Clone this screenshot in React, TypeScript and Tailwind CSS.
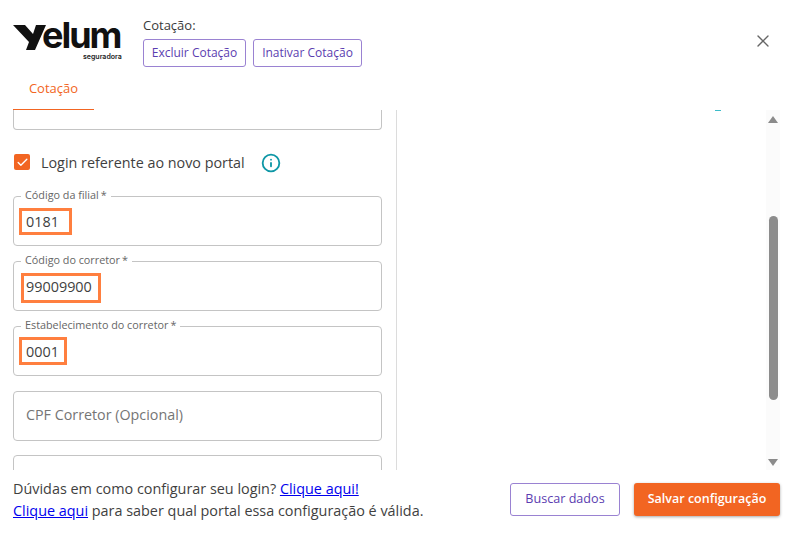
import { Check, Info, X } from 'lucide-react';

interface FieldProps {
  label: string;
  value: string;
  boxClass: string;
}

function Field({ label, value, boxClass }: FieldProps) {
  return (
    <div className="relative h-[50px] w-[369px] shrink-0 rounded-[4px] border border-[#c4c4c4]">
      <span className="absolute left-[7px] top-[-10px] whitespace-nowrap bg-white px-[4px] text-[10.8px] leading-[15px] text-[#666666]">
        {label}
        <span className="ml-[2px]">*</span>
      </span>
      <div className={`absolute border-[3px] border-[#ff7f3f] text-[14.4px] leading-[20px] text-[#3f3f3f] ${boxClass}`}>
        {value}
      </div>
    </div>
  );
}

export default function App() {
  return (
    <div className="flex h-[538px] w-[792px] flex-col overflow-hidden bg-white font-['Open_Sans',sans-serif] text-[#3f3f3f]">
      <header className="flex h-[70px] shrink-0 items-start pl-[13px] pr-[20px]">
        <div className="mt-[20px] flex h-[42px] w-[130px] shrink-0 flex-col">
          <div className="flex h-[30px] items-end">
            <svg width="33" height="26" viewBox="0 0 33 26" className="shrink-0">
              <path d="M0 1h12l8 9 3-9h10L22 26h-9l3-8z" fill="#111111" />
            </svg>
            <span className="ml-[-4px] font-['Inter',sans-serif] text-[36px] leading-[30px] font-bold tracking-[-2px] text-[#111111]">
              elum
            </span>
          </div>
          <span className="ml-[70px] mt-[3px] w-[40px] whitespace-nowrap font-['Inter',sans-serif] text-[7px] leading-[8px] font-semibold text-[#222222]">
            seguradora
          </span>
        </div>
        <div className="mt-[16px] flex flex-col">
          <span className="text-[13px] leading-[18px] text-[#3a3a3a]">Cotação:</span>
          <div className="mt-[5px] flex gap-[7px]">
            <button className="h-[28px] w-[103px] rounded-[3px] border border-[#9a82d2] text-[12px] text-[#5b3db0]">
              Excluir Cotação
            </button>
            <button className="h-[28px] w-[109px] rounded-[3px] border border-[#9a82d2] text-[12px] text-[#5b3db0]">
              Inativar Cotação
            </button>
          </div>
        </div>
        <X size={20} strokeWidth={1.6} className="mt-[31px] ml-auto mr-[-1px] text-[#666666]" />
      </header>

      <nav className="flex h-[40px] shrink-0 pl-[13px]">
        <div className="flex h-[40px] w-[81px] items-center justify-center border-b border-[#f26522] pb-[2px] text-[13px] text-[#f26522]">
          Cotação
        </div>
      </nav>

      <main className="flex h-[360px] shrink-0 pl-[13px] pr-[12px]">
        <section className="flex w-[369px] shrink-0 flex-col overflow-hidden">
          <div className="h-[20px] w-[369px] shrink-0 rounded-b-[4px] border-x border-b border-[#c4c4c4]" />
          <div className="ml-[1px] mt-[24px] flex h-[16px] items-center">
            <span className="flex h-[16px] w-[16px] items-center justify-center rounded-[2px] bg-[#f26522]">
              <Check size={13} strokeWidth={2.5} className="text-white" />
            </span>
            <span className="ml-[11px] mt-[2px] text-[14.35px] text-[#3f3f3f]">Login referente ao novo portal</span>
            <Info size={20} strokeWidth={2.2} className="ml-[16px] mt-[1px] text-[#0e97a6]" />
          </div>
          <div className="mt-[26px] flex flex-col gap-[15px]">
            <Field
              label="Código da filial"
              value="0181"
              boxClass="left-[5px] top-[11px] h-[27px] w-[53px] pl-[4px] leading-[21px]"
            />
            <Field
              label="Código do corretor"
              value="99009900"
              boxClass="left-[7px] top-[11px] h-[30px] w-[80px] pl-[2px] leading-[22px]"
            />
            <Field
              label="Estabelecimento do corretor"
              value="0001"
              boxClass="left-[5px] top-[10px] h-[28px] w-[48px] pl-[4px] leading-[23px]"
            />
            <div className="flex h-[50px] w-[369px] shrink-0 items-center rounded-[4px] border border-[#c4c4c4] pl-[12px] pb-[3px] text-[14.3px] text-[#757575]">
              CPF Corretor (Opcional)
            </div>
            <div className="mt-[-1px] h-[50px] w-[369px] shrink-0 rounded-[4px] border border-[#c4c4c4]" />
          </div>
        </section>
        <div className="ml-[14px] w-px shrink-0 bg-[#dcdcdc]" />
        <div className="relative flex-1">
          <span className="absolute right-[45px] top-0 h-px w-[6px] bg-[#3dbcc9]" />
        </div>
        <aside className="flex w-[14px] shrink-0 flex-col items-center bg-[#fbfbfb]">
          <svg width="10" height="7" viewBox="0 0 10 7" className="mt-[6px] shrink-0">
            <path d="M5 0l5 7H0z" fill="#8a8a8a" />
          </svg>
          <div className="mt-[93px] h-[184px] w-[9px] shrink-0 rounded-[5px] bg-[#8c8c8c]" />
          <svg width="10" height="7" viewBox="0 0 10 7" className="mt-[59px] shrink-0">
            <path d="M0 0h10L5 7z" fill="#8a8a8a" />
          </svg>
        </aside>
      </main>

      <footer className="flex shrink-0 items-start justify-between pl-[13px] pr-[12px] pt-[8px]">
        <p className="text-[14.4px] leading-[21.5px] text-[#3f3f3f]">
          Dúvidas em como configurar seu login?{' '}
          <a href="#" className="text-[#0000ee] underline">
            Clique aqui!
          </a>
          <br />
          <a href="#" className="text-[#0000ee] underline">
            Clique aqui
          </a>{' '}
          para saber qual portal essa configuração é válida.
        </p>
        <div className="mt-[5px] flex gap-[14px]">
          <button className="h-[33px] w-[110px] rounded-[3px] border border-[#9a82d2] pb-[1px] text-[12.6px] font-medium text-[#5b3db0]">
            Buscar dados
          </button>
          <button className="h-[33px] w-[146px] rounded-[3px] bg-[#f26522] pb-[1px] text-[12.5px] font-semibold text-white shadow-[0_1px_3px_rgba(0,0,0,0.35)]">
            Salvar configuração
          </button>
        </div>
      </footer>
    </div>
  );
}
